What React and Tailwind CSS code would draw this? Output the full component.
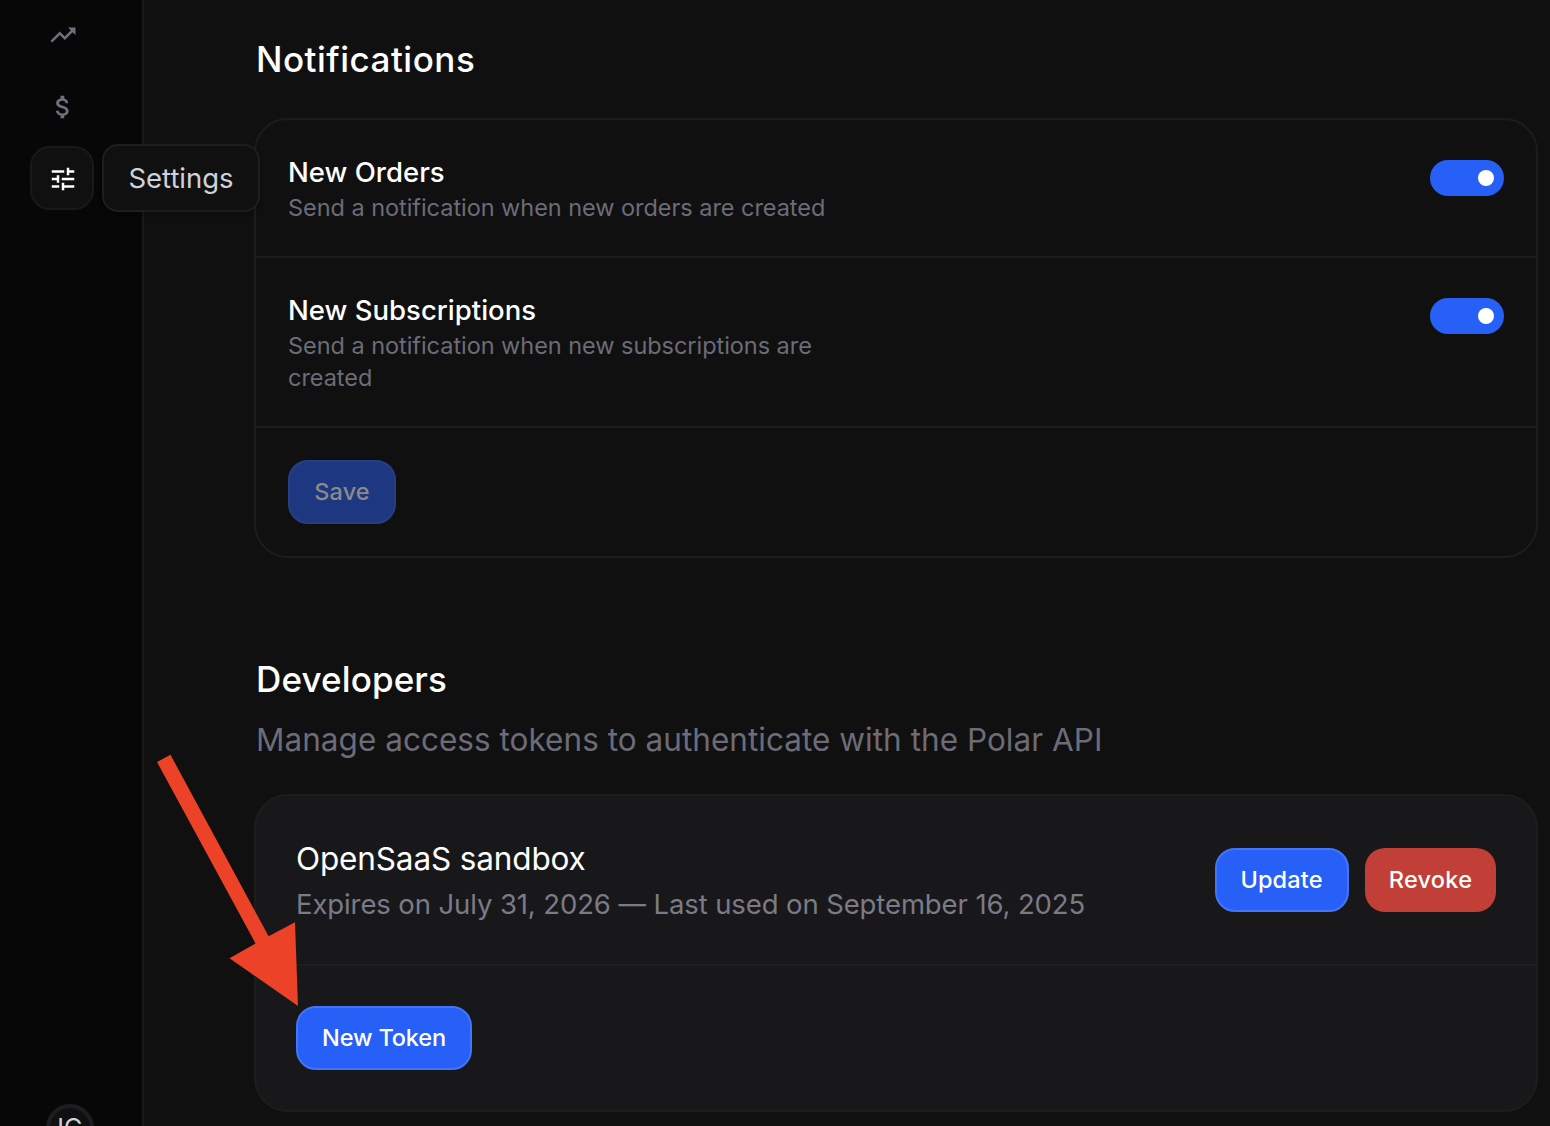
import React from "react";
import { MdTrendingUp, MdAttachMoney, MdTune } from "react-icons/md";

function NavItem({ icon: Icon, active }) {
  return (
    <div
      className={
        active
          ? "flex size-16 items-center justify-center rounded-[20px] border-2 border-[#19191a] bg-[#101010] pt-px pl-px text-white"
          : "flex size-16 items-center justify-center pt-px pl-[2px] text-[#71717d]"
      }
    >
      <Icon className="size-[30px]" />
    </div>
  );
}

function Sidebar() {
  return (
    <aside className="relative flex w-36 shrink-0 flex-col justify-between border-r-2 border-[#19191a] bg-[#070707]">
      <nav className="flex flex-col gap-2 pt-[2px] pl-[30px]">
        <NavItem icon={MdTrendingUp} />
        <NavItem icon={MdAttachMoney} />
        <NavItem icon={MdTune} active />
      </nav>
      <div className="absolute top-36 left-[102px] z-10 flex h-[68px] w-[158px] items-center justify-center rounded-2xl border-2 border-[#1e1e1f] bg-[#101010] pt-[2px] text-[27.5px] tracking-[-0.04px] whitespace-nowrap text-[#d1d1db] shadow-md">
        Settings
      </div>
      <div className="h-[22px] overflow-hidden pl-[46px]">
        <div className="flex size-12 items-center justify-center rounded-full border-4 border-[#1d1d1f] bg-[#101010] text-[25px] leading-none text-[#d1d1db]">
          IG
        </div>
      </div>
    </aside>
  );
}

function Toggle() {
  return (
    <div className="mt-2 flex h-9 w-[74px] items-center justify-end rounded-full bg-[#2760f6] pr-[10px]">
      <div className="size-4 rounded-full bg-white" />
    </div>
  );
}

function SettingRow({ title, children }) {
  return (
    <div className="flex items-start justify-between border-b-2 border-[#1d1d1e] p-8">
      <div className="w-[560px]">
        <h3 className="text-[27.5px] leading-10 font-medium tracking-[0.02px] text-white">{title}</h3>
        <p className="text-[23.5px] leading-8 tracking-[-0.045px] text-[#6c6c78]">{children}</p>
      </div>
      <Toggle />
    </div>
  );
}

const buttonBase =
  "flex h-16 items-center justify-center rounded-[20px] text-[23.5px] font-medium whitespace-nowrap";

export default function App() {
  return (
    <div className="relative flex h-[1126px] w-[1550px] overflow-hidden bg-[#101010] font-['Inter',sans-serif]">
      <Sidebar />
      <main className="flex flex-1 flex-col pt-[39px] pr-3 pl-[110px]">
        <section>
          <h2 className="pl-[2px] text-[35px] leading-10 font-medium tracking-[0.5px] text-white">
            Notifications
          </h2>
          <div className="mt-[39px] rounded-[34px] border-2 border-[#1d1d1e]">
            <SettingRow title="New Orders">Send a notification when new orders are created</SettingRow>
            <SettingRow title="New Subscriptions">
              Send a notification when new subscriptions are created
            </SettingRow>
            <div className="flex p-8">
              <button
                className={`${buttonBase} w-[108px] border-2 border-[#263f84] bg-[#1d3781] tracking-[0.15px] text-[#8a8a8a]`}
              >
                Save
              </button>
            </div>
          </div>
        </section>

        <section className="mt-[101px]">
          <h2 className="pl-[2px] text-[35px] leading-10 font-medium tracking-[0.13px] text-white">Developers</h2>
          <p className="mt-5 pl-[2px] text-[31.5px] leading-[42px] tracking-[0.03px] text-[#6c6c78]">
            Manage access tokens to authenticate with the Polar API
          </p>
          <div className="mt-[33px] rounded-[34px] border-2 border-[#1d1d1e] bg-[#18181a]">
            <div className="flex items-center justify-between border-b-2 border-[#1e1e1f] p-10">
              <div>
                <h3 className="text-[31.5px] leading-[45px] tracking-[-0.14px] text-white">OpenSaaS sandbox</h3>
                <p className="mt-[3px] text-[27.5px] leading-10 tracking-[-0.108px] text-[#7b7b87]">
                  Expires on July 31, 2026 — Last used on September 16, 2025
                </p>
              </div>
              <div className="flex gap-4">
                <button
                  className={`${buttonBase} w-[134px] border-2 border-[#4474f7] bg-[#2760f6] pr-px tracking-[0.13px] text-white`}
                >
                  Update
                </button>
                <button className={`${buttonBase} w-[131px] bg-[#c23f37] tracking-[0.25px] text-white`}>
                  Revoke
                </button>
              </div>
            </div>
            <div className="flex p-10">
              <button
                className={`${buttonBase} w-44 border-2 border-[#4474f7] bg-[#2760f6] tracking-[-0.15px] text-white`}
              >
                New Token
              </button>
            </div>
          </div>
        </section>
      </main>

      <svg className="absolute top-[750px] left-[150px] z-20" width="160" height="260" viewBox="150 750 160 260">
        <path
          d="M157 762L170.5 754.8L268.6 936.3L295 922.3L298 1006L229.5 958.3L255.6 943.4Z"
          fill="#eb4228"
        />
      </svg>
    </div>
  );
}
